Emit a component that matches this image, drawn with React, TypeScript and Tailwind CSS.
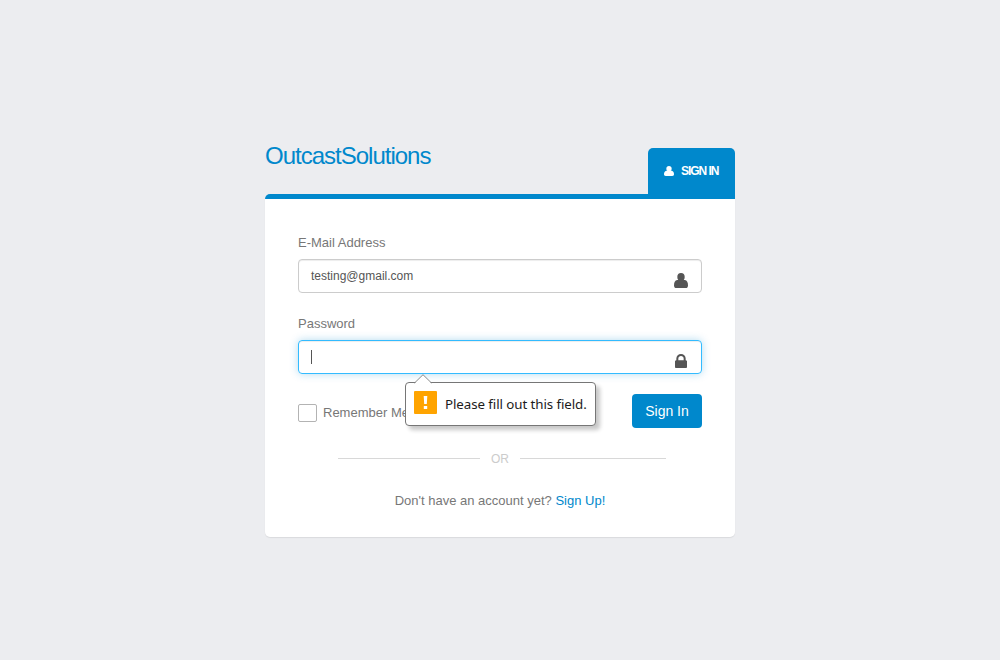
import React from "react";

function UserIcon({ className }: { className?: string }) {
  return (
    <svg viewBox="0 0 14 15" fill="currentColor" preserveAspectRatio="none" className={className} aria-hidden="true">
      <ellipse cx="7" cy="4" rx="3.7" ry="4" />
      <path d="M3.2 7.1h7.6c2.2.4 3.2 2.4 3.2 5.3 0 1.7-.9 2.6-2.4 2.6H2.4C.9 15 0 14.100 0 12.400 0 9.500 1 7.500 3.200 7.100z" />
    </svg>
  );
}

function LockIcon({ className }: { className?: string }) {
  return (
    <svg viewBox="0 0 1152 1408" fill="currentColor" preserveAspectRatio="none" className={className} aria-hidden="true">
      <path
        transform="translate(0 1408) scale(1 -1)"
        d="M320 768h512v192q0 106-75 181t-181 75-181-75-75-181v-192zM1152 672v-576q0-40-28-68t-68-28h-960q-40 0-68 28t-28 68v576q0 40 28 68t68 28h32v192q0 184 132 316t316 132 316-132 132-316v-192h32q40 0 68-28t28-68z"
      />
    </svg>
  );
}

function ValidationBubble() {
  return (
    <div className="absolute left-[106px] top-[41px] z-10 flex h-[44px] w-[191px] items-center rounded-[4px] border border-[#767676] bg-white pl-2 shadow-[4px_4px_4px_rgba(0,0,0,0.22)]">
      <svg className="absolute -top-[9px] left-[8px]" width="18" height="10" viewBox="0 0 18 10" aria-hidden="true">
        <path d="M0.5 9.5L9 1L17.5 9.5V10H0.5Z" fill="#fff" />
        <path d="M0.5 9L9 0.7L17.5 9" fill="none" stroke="#8a8a8a" />
      </svg>
      <svg className="mb-[3px] shrink-0" width="23" height="23" viewBox="0 0 23 23" aria-hidden="true">
        <rect width="23" height="23" rx="1" fill="#ffa400" />
        <path d="M9.7 5h3.6l-.5 8h-2.6zM9.8 15h3.4v3H9.8z" fill="#fff" />
      </svg>
      <span className="ml-[8px] whitespace-nowrap font-['Noto_Sans',sans-serif] text-[13.33px] leading-5 tracking-[-0.08px] text-[#1c1c1c]">
        Please fill out this field.
      </span>
    </div>
  );
}

export default function App() {
  return (
    <main className="flex h-[660px] w-full justify-center bg-[#ecedf0] pt-[148px] font-['Liberation_Sans',Arial,sans-serif] text-[13px] text-[#777777]">
      <div className="w-[470px]">
        <header className="flex h-[46px] items-start justify-between">
          <h1 className="-mt-[8px] text-[24px] leading-8 tracking-[-1px] text-[#0088cc]">OutcastSolutions</h1>
          <h2 className="flex h-[46px] w-[87px] items-center rounded-t-[5px] bg-[#0088cc] pl-4 text-[12px] font-bold tracking-[-1.05px] text-white">
            <UserIcon className="mr-[7px] h-[10px] w-[10px]" />
            <span>SIGN IN</span>
          </h2>
        </header>
        <form
          className="h-[343px] rounded-b-[5px] rounded-tl-[5px] border-t-[5px] border-[#0088cc] bg-white px-[33px] pt-[34px] shadow-[0_1px_1px_rgba(0,0,0,0.08)]"
          onSubmit={(e) => e.preventDefault()}
        >
          <label className="block leading-5">E-Mail Address</label>
          <div className="mt-[6px] flex h-[34px] items-center justify-between rounded-[4px] border border-[#cccccc] pl-3 pr-[13px] text-[12px] text-[#555555] shadow-[inset_0_1px_1px_rgba(0,0,0,0.075)]">
            <span>testing@gmail.com</span>
            <UserIcon className="mt-[9px] h-[15px] w-[14px]" />
          </div>
          <label className="mt-[21px] block leading-5">Password</label>
          <div className="relative mt-[6px] flex h-[34px] items-center justify-between rounded-[4px] border border-[#33bbff] pl-3 pr-[14px] text-[#555555] shadow-[inset_0_1px_1px_rgba(0,0,0,0.075),0_0_8px_rgba(0,136,204,0.3)]">
            <span className="h-[14px] w-px bg-[#555555]" />
            <LockIcon className="mt-[8px] h-[14px] w-[12px]" />
            <ValidationBubble />
          </div>
          <div className="mt-5 flex justify-between">
            <label className="flex h-[38px] items-center">
              <span className="mr-[6px] h-[18px] w-[19px] rounded-[2px] border border-[#b3b3b3] bg-white" />
              Remember Me
            </label>
            <button className="h-[34px] w-[70px] rounded-[4px] bg-[#0088cc] text-[14px] text-white">Sign In</button>
          </div>
          <div className="mt-[17px] flex h-5 items-start pl-10 pr-9 text-[12px] leading-5 text-[#cccccc]">
            <span className="mt-[9px] h-px flex-1 bg-[#d8d8d8]" />
            <span className="w-10 text-center">OR</span>
            <span className="mt-[9px] h-px w-[146px] bg-[#d8d8d8]" />
          </div>
          <p className="mt-[22px] text-center leading-5">
            Don't have an account yet? <a className="text-[#0088cc]">Sign Up!</a>
          </p>
        </form>
      </div>
    </main>
  );
}
